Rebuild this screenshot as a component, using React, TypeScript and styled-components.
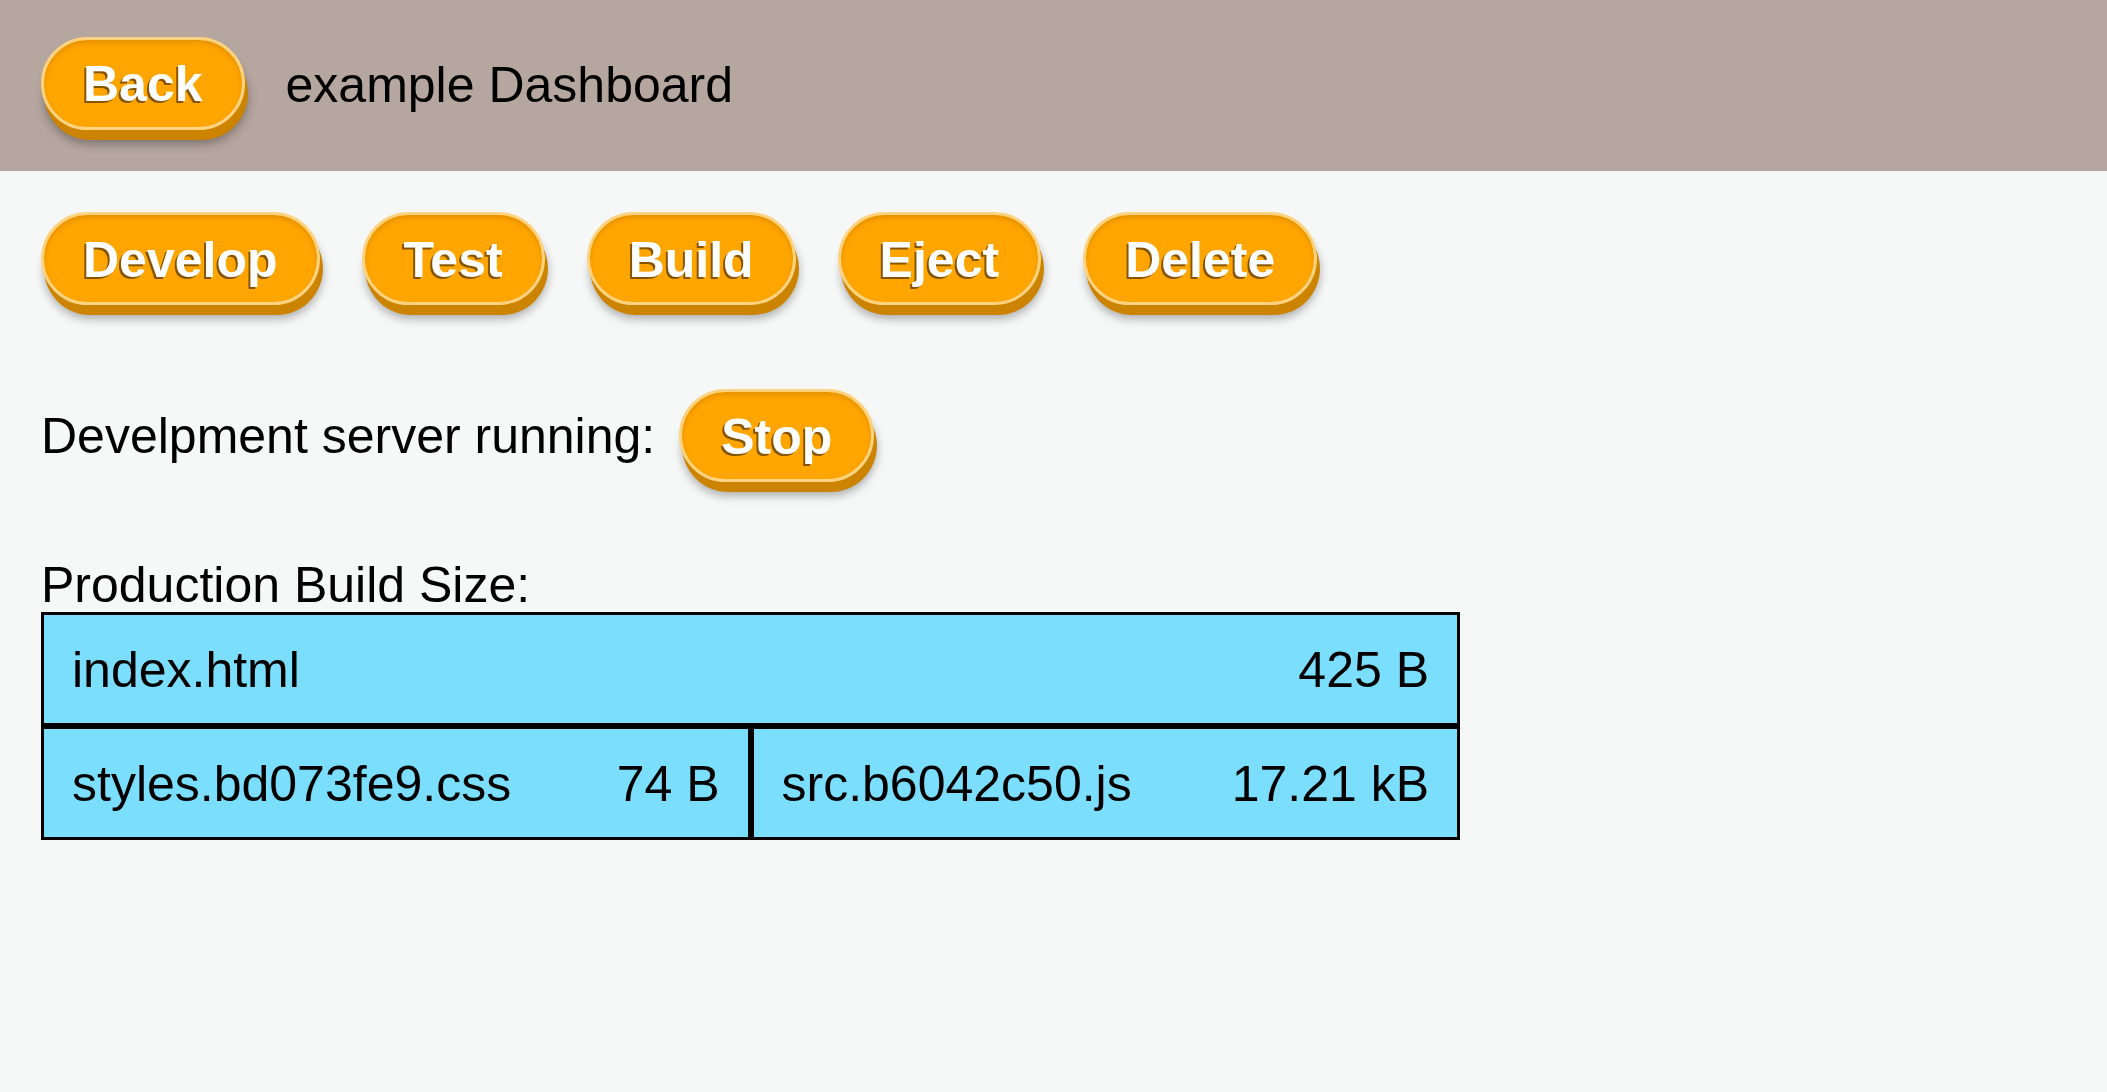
import React from "react"
import styled, { createGlobalStyle } from "styled-components"

const GlobalStyle = createGlobalStyle`
  html, body {
    margin: 0;
    padding: 0;
    background: #f6f8f7;
    font-family: "Liberation Sans", Arial, sans-serif;
    color: #000;
  }
`

const Header = styled.header`
  display: flex;
  align-items: center;
  gap: 41px;
  height: 171px;
  box-sizing: border-box;
  padding: 0 41px 5px;
  background: #b5a69f;
`

const Title = styled.h1`
  margin: 5px 0 0;
  font-size: 50px;
  font-weight: 400;
  line-height: 1.15;
`

const Main = styled.main`
  padding: 41px 41px 0;
`

const ButtonRow = styled.div`
  display: flex;
  align-items: center;
  gap: 42px;
`

const Button = styled.button`
  height: 93px;
  box-sizing: border-box;
  padding: 2px 39px 0;
  border: 3px solid #ffd27f;
  border-radius: 47px;
  background: #ffa500;
  color: #fff;
  font-family: "Liberation Sans", Arial, sans-serif;
  font-size: 50px;
  font-weight: 700;
  line-height: 1;
  text-shadow: -2px 2px 0 #845400;
  cursor: pointer;
  box-shadow: inset 0 3px 4px rgba(150, 90, 0, 0.25), 3px 10px 0 0 #cc8400,
    3px 14px 10px rgba(0, 0, 0, 0.3);
  &:hover {
    background: #ffb020;
  }
`

const StatusRow = styled.div`
  display: flex;
  align-items: center;
  gap: 24px;
  margin-top: 84px;
  font-size: 50px;
  line-height: 1.15;

  & > span {
    padding-top: 3px;
  }
`

const SizeLabel = styled.div`
  margin-top: 77px;
  font-size: 50px;
  line-height: 53px;
`

const SizeTable = styled.div`
  display: grid;
  grid-template-columns: 1fr 1fr;
  width: 1419px;
`

interface CellProps {
  $wide?: boolean
}

const Cell = styled.div<CellProps>`
  grid-column: ${(props) => (props.$wide ? "1 / span 2" : "auto")};
  display: flex;
  align-items: center;
  justify-content: space-between;
  height: 114px;
  box-sizing: border-box;
  padding: 2px 28px 0;
  border: 3px solid #000;
  background: #7bdefc;
  font-size: 50px;
`

const files = [
  { name: "styles.bd073fe9.css", size: "74 B" },
  { name: "src.b6042c50.js", size: "17.21 kB" },
]

export default function App() {
  return (
    <>
      <GlobalStyle />
      <Header>
        <Button>Back</Button>
        <Title>example Dashboard</Title>
      </Header>
      <Main>
        <ButtonRow>
          <Button>Develop</Button>
          <Button>Test</Button>
          <Button>Build</Button>
          <Button>Eject</Button>
          <Button>Delete</Button>
        </ButtonRow>
        <StatusRow>
          <span>Develpment server running:</span>
          <Button>Stop</Button>
        </StatusRow>
        <SizeLabel>Production Build Size:</SizeLabel>
        <SizeTable>
          <Cell $wide>
            <span>index.html</span>
            <span>425 B</span>
          </Cell>
          {files.map((f) => (
            <Cell key={f.name}>
              <span>{f.name}</span>
              <span>{f.size}</span>
            </Cell>
          ))}
        </SizeTable>
      </Main>
    </>
  )
}
